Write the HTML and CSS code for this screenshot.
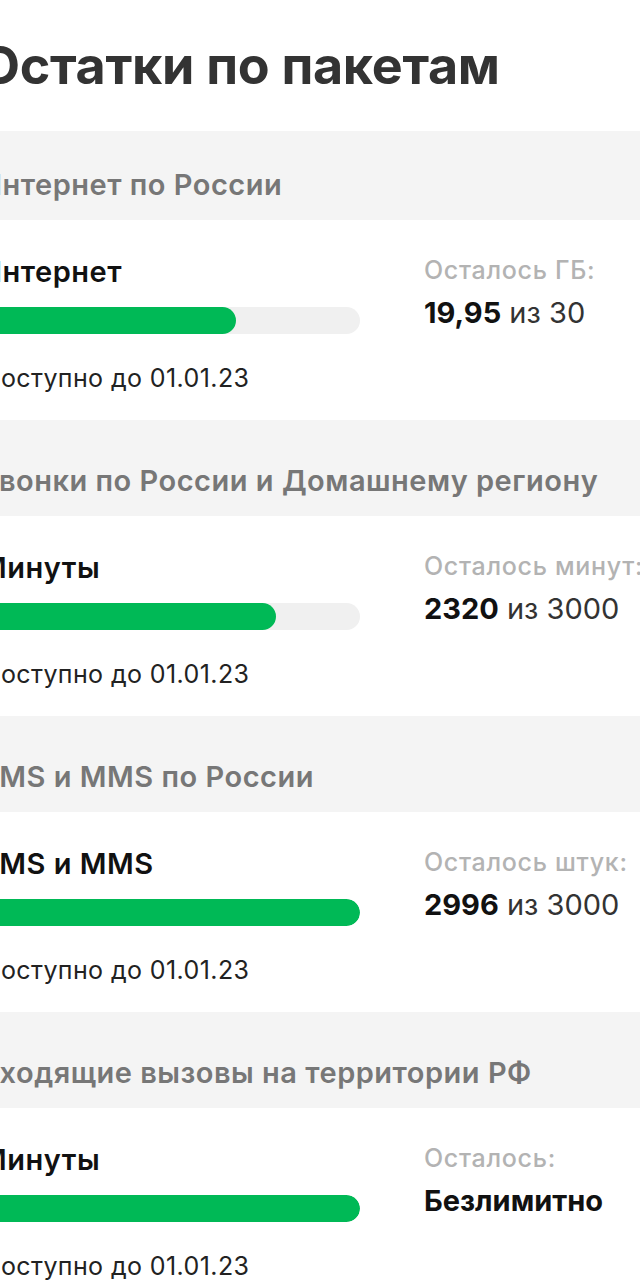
FILE: index.html
```html
<!DOCTYPE html>
<html>
<head>
	<meta charset="utf-8">
	<title>Остатки по пакетам</title>
	<link rel="stylesheet" href="styles.css">
</head>
<body>
	<div class="page">
		<h1 class="title">Остатки по пакетам</h1>

		<div class="group group-first">Интернет по России</div>
		<div class="item">
			<div class="left">
				<div class="name">Интернет</div>
				<div class="bar"><div class="fill" style="width: 67.3%"></div></div>
				<div class="date">Доступно до 01.01.23</div>
			</div>
			<div class="right">
				<div class="label">Осталось ГБ:</div>
				<div class="value"><b>19,95</b> из 30</div>
			</div>
		</div>

		<div class="group">Звонки по России и Домашнему региону</div>
		<div class="item">
			<div class="left">
				<div class="name">Минуты</div>
				<div class="bar"><div class="fill" style="width: 78%"></div></div>
				<div class="date">Доступно до 01.01.23</div>
			</div>
			<div class="right">
				<div class="label">Осталось минут:</div>
				<div class="value"><b>2320</b> из 3000</div>
			</div>
		</div>

		<div class="group">SMS и MMS по России</div>
		<div class="item">
			<div class="left">
				<div class="name">SMS и MMS</div>
				<div class="bar"><div class="fill" style="width: 99.9%"></div></div>
				<div class="date">Доступно до 01.01.23</div>
			</div>
			<div class="right">
				<div class="label">Осталось штук:</div>
				<div class="value"><b>2996</b> из 3000</div>
			</div>
		</div>

		<div class="group">Входящие вызовы на территории РФ</div>
		<div class="item">
			<div class="left">
				<div class="name">Минуты</div>
				<div class="bar"><div class="fill" style="width: 100%"></div></div>
				<div class="date">Доступно до 01.01.23</div>
			</div>
			<div class="right">
				<div class="label">Осталось:</div>
				<div class="value"><b>Безлимитно</b></div>
			</div>
		</div>
	</div>
</body>
</html>
```

FILE: styles.css
```css
*{
	margin: 0;
	padding: 0;
	box-sizing: border-box;
}
html,body{
	background: #fff;
	overflow: hidden;
}
body{
	font-family: Inter, Roboto, "Noto Sans", Arial, sans-serif;
	color: #111;
}
.page{
	margin-left: -20px;
	width: 700px;
}
.title{
	font-size: 52px;
	font-weight: 700;
	color: #333;
	line-height: 60px;
	padding-top: 36px;
	height: 131px;
	letter-spacing: -0.3px;
}
.group{
	height: 96px;
	background: #f4f4f4;
	color: #777;
	font-size: 29px;
	font-weight: 600;
	line-height: 36px;
	padding-top: 43px;
	letter-spacing: 0.5px;
	white-space: nowrap;
}
.group-first{
	height: 89px;
	padding-top: 36px;
}
.item{
	height: 200px;
	display: grid;
	grid-template-columns: 380px 1fr;
	column-gap: 64px;
	padding-top: 34px;
}
.name{
	font-size: 29px;
	font-weight: 600;
	line-height: 36px;
	color: #111;
	letter-spacing: 0.5px;
}
.bar{
	margin-top: 17px;
	height: 27px;
	border-radius: 14px;
	background: #f0f0f0;
	overflow: hidden;
}
.fill{
	height: 100%;
	background: #00b956;
	border-radius: 14px;
}
.date{
	margin-top: 28px;
	font-size: 25px;
	line-height: 32px;
	color: #222;
	letter-spacing: 0.4px;
}
.label{
	font-size: 25px;
	font-weight: 500;
	line-height: 32px;
	color: #b3b3b3;
	white-space: nowrap;
	letter-spacing: 0.7px;
}
.value{
	margin-top: 9px;
	font-size: 29px;
	line-height: 36px;
	color: #333;
	white-space: nowrap;
}
.value b{
	font-weight: 700;
	color: #111;
}
```
